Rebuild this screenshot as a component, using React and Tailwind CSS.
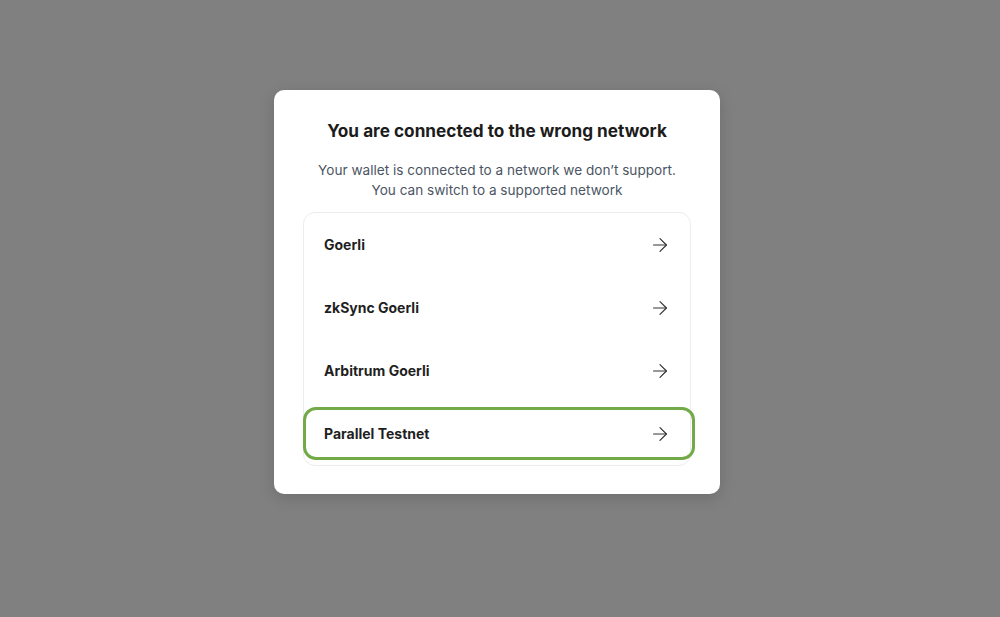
import React from "react";
import { ArrowRight } from "lucide-react";

const networks = ["Goerli", "zkSync Goerli", "Arbitrum Goerli", "Parallel Testnet"];

export default function App() {
  return (
    <div
      className="w-[1000px] h-[617px] bg-[#808080] pt-[90px]"
      style={{ fontFamily: "'Inter', 'Liberation Sans', sans-serif" }}
    >
      <div className="ml-[274px] w-[446px] bg-white rounded-[10px] shadow-[0_4px_16px_rgba(0,0,0,0.15)] px-[29px] pt-[30px] pb-[28px]">
        <h1 className="text-center text-[17.2px] leading-[22px] font-bold text-[#1c1c1c]">
          You are connected to the wrong network
        </h1>
        <p className="mt-[18px] text-center text-[13.6px] leading-[20px] text-[#4b5563]">
          Your wallet is connected to a network we don’t support.
          <br />
          You can switch to a supported network
        </p>
        <div className="mt-[12px] border border-[#ececec] rounded-[12px]">
          {networks.map((n, i) => (
            <div key={n} className="relative h-[63px] flex items-center justify-between pl-[20px] pr-[19px]">
              <span className="text-[14px] font-bold text-[#1f1f1f]">{n}</span>
              <ArrowRight size={22} strokeWidth={1.3} className="text-[#333]" />
              {i === 3 && (
                <div className="absolute left-[-1px] right-[-5px] top-[5px] bottom-[5px] rounded-[13px] border-[3px] border-[#72aa48]" />
              )}
            </div>
          ))}
        </div>
      </div>
    </div>
  );
}
